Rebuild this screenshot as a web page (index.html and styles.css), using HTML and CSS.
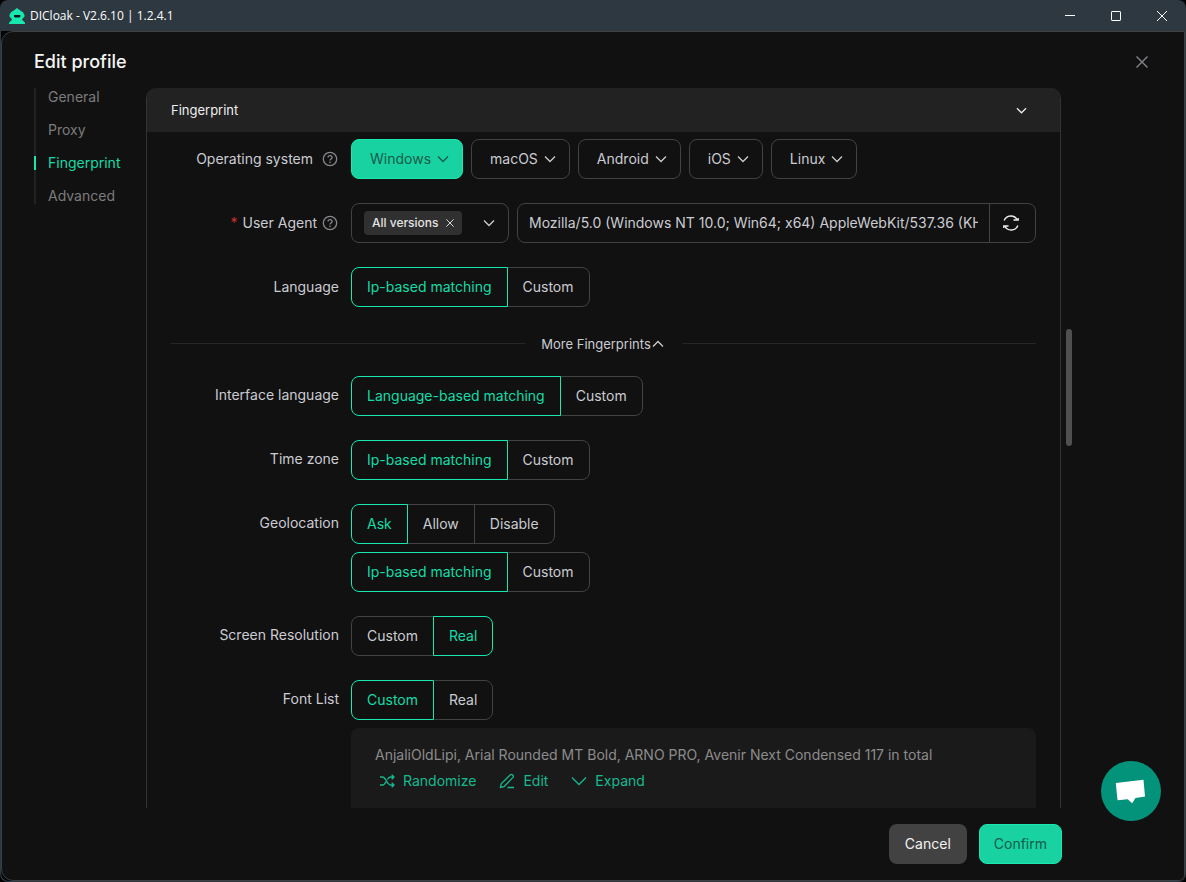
FILE: index.html
```
<!DOCTYPE html>
<html lang="en">
<head>
<meta charset="utf-8">
<title>DICloak</title>
<link rel="stylesheet" href="styles.css">
</head>
<body>
<svg class="sprite" aria-hidden="true">
  <symbol id="chevron" viewBox="0 0 12 12"><path d="M1 3.500 6 8.500l5-5" fill="none" stroke="currentColor" stroke-width="1.300"/></symbol>
  <symbol id="cross" viewBox="0 0 12 12"><path d="M.5.5l11 11M11.500.5l-11 11" fill="none" stroke="currentColor" stroke-width="1.400"/></symbol>
  <symbol id="help" viewBox="0 0 16 16"><g fill="none" stroke="currentColor" stroke-width="1.300"><circle cx="8" cy="8" r="6.700"/><path d="M6 6.600c0-2.800 4.100-2.600 4.100-.1C10.100 8 8 7.900 8 9.600"/></g><circle cx="8" cy="11.400" r=".8" fill="currentColor"/></symbol>
</svg>
<div class="window">
  <header class="titlebar">
    <svg class="logo" viewBox="0 0 16 16"><path fill="#16e8b0" d="M8 0l2.500 2L14 4.200 15.500 7v1.500L12.800 11.500 16 14.700V16H0v-1.300l3.200-3.200L.5 8.500V7L2 4.200 5.500 2z"/><path fill="#0c1a1a" d="M5 7h6.300v1.600l-1 1H6l-1-1z"/></svg>
    <span class="app-name">DICloak - V2.6.10 | 1.2.4.1</span>
    <div class="window-buttons">
      <button type="button" aria-label="Minimize"><svg viewBox="0 0 10 10"><path d="M0 4.500h10"/></svg></button>
      <button type="button" aria-label="Maximize"><svg viewBox="0 0 10 10"><rect x=".5" y=".5" width="9" height="9" rx=".6"/></svg></button>
      <button type="button" aria-label="Close"><svg viewBox="0 0 10 10"><path d="M0 0l10 10M10 0L0 10"/></svg></button>
    </div>
  </header>
  <div class="client">
  <main class="dialog">
    <div class="dialog-head">
      <h1>Edit profile</h1>
      <button class="dialog-close" type="button" aria-label="Close dialog"><svg><use href="#cross"/></svg></button>
    </div>
    <div class="dialog-body">
      <nav class="anchors">
        <a href="#general">General</a>
        <a href="#proxy">Proxy</a>
        <a class="active" href="#fingerprint">Fingerprint</a>
        <a href="#advanced">Advanced</a>
      </nav>
      <section class="panel" id="fingerprint">
        <h2 class="panel-head">Fingerprint <svg class="chevron"><use href="#chevron"/></svg></h2>
        <form class="panel-body">
          <div class="rows">
            <div class="row">
              <span class="label">Operating system <svg class="help spaced"><use href="#help"/></svg></span>
              <div class="controls">
                <button class="os selected" type="button">Windows <svg class="chevron"><use href="#chevron"/></svg></button>
                <button class="os" type="button">macOS <svg class="chevron"><use href="#chevron"/></svg></button>
                <button class="os" type="button">Android <svg class="chevron"><use href="#chevron"/></svg></button>
                <button class="os" type="button">iOS <svg class="chevron"><use href="#chevron"/></svg></button>
                <button class="os" type="button">Linux <svg class="chevron"><use href="#chevron"/></svg></button>
              </div>
            </div>
            <div class="row">
              <label class="label" for="ua"><span class="required">*</span> User Agent <svg class="help"><use href="#help"/></svg></label>
              <div class="controls">
                <div class="versions">
                  <span class="tag">All versions <button type="button" aria-label="Remove All versions"><svg><use href="#cross"/></svg></button></span>
                  <button class="open" type="button" aria-label="Choose versions"><svg class="chevron"><use href="#chevron"/></svg></button>
                </div>
                <div class="ua">
                  <input id="ua" type="text" value="Mozilla/5.0 (Windows NT 10.0; Win64; x64) AppleWebKit/537.36 (KHTML, like Gecko) Chrome/137.0.0.0 Safari/537.36">
                  <button type="button" aria-label="Refresh user agent"><svg viewBox="0 0 18 18"><g fill="none" stroke="currentColor" stroke-width="1.400"><path d="M2.200 6.500C4.200 1 12.300.200 15.300 6M15.800 11.500C13.800 17 5.700 17.800 2.700 12"/><path d="M11.500 6h4.700V4M6.500 12H1.800v2"/></g></svg></button>
                </div>
              </div>
            </div>
            <div class="row" role="radiogroup" aria-labelledby="l-lang">
              <span class="label" id="l-lang">Language</span>
              <div class="segments">
                <label><input type="radio" name="lang" checked><span>Ip-based matching</span></label>
                <label><input type="radio" name="lang"><span>Custom</span></label>
              </div>
            </div>
          </div>
          <div class="more"><button type="button">More Fingerprints<svg class="chevron up"><use href="#chevron"/></svg></button></div>
          <div class="rows compact">
            <div class="row" role="radiogroup" aria-labelledby="l-ui">
              <span class="label" id="l-ui">Interface language</span>
              <div class="segments">
                <label><input type="radio" name="ui" checked><span>Language-based matching</span></label>
                <label><input type="radio" name="ui"><span>Custom</span></label>
              </div>
            </div>
            <div class="row" role="radiogroup" aria-labelledby="l-tz">
              <span class="label" id="l-tz">Time zone</span>
              <div class="segments">
                <label><input type="radio" name="tz" checked><span>Ip-based matching</span></label>
                <label><input type="radio" name="tz"><span>Custom</span></label>
              </div>
            </div>
            <div class="row" role="group" aria-labelledby="l-geo">
              <span class="label" id="l-geo">Geolocation</span>
              <div class="stack">
                <div class="segments">
                  <label><input type="radio" name="geo" checked><span>Ask</span></label>
                  <label><input type="radio" name="geo"><span>Allow</span></label>
                  <label><input type="radio" name="geo"><span>Disable</span></label>
                </div>
                <div class="segments">
                  <label><input type="radio" name="geosrc" checked><span>Ip-based matching</span></label>
                  <label><input type="radio" name="geosrc"><span>Custom</span></label>
                </div>
              </div>
            </div>
            <div class="row" role="radiogroup" aria-labelledby="l-res">
              <span class="label" id="l-res">Screen Resolution</span>
              <div class="segments">
                <label><input type="radio" name="res"><span>Custom</span></label>
                <label><input type="radio" name="res" checked><span>Real</span></label>
              </div>
            </div>
            <div class="row" role="radiogroup" aria-labelledby="l-font">
              <span class="label" id="l-font">Font List</span>
              <div class="stack">
                <div class="segments">
                  <label><input type="radio" name="font" checked><span>Custom</span></label>
                  <label><input type="radio" name="font"><span>Real</span></label>
                </div>
                <div class="fonts">
                  <p>AnjaliOldLipi, Arial Rounded MT Bold, ARNO PRO, Avenir Next Condensed 117 in total</p>
                  <div class="font-actions">
                    <button type="button"><svg viewBox="0 0 16 16"><path d="M1 4h2.500C7 4 8 12 11.500 12H15M1 12h2.500c1.600 0 2.700-1.600 3.600-3.500M8.400 6.500C9.200 5 10.200 4 11.500 4H15M12.700 1.700 15 4l-2.300 2.300M12.700 9.700 15 12l-2.300 2.300"/></svg>Randomize</button>
                    <button type="button"><svg viewBox="0 0 16 16"><path d="M1.500 14.500l.7-3.600L11.300 1.800c1.500-1.300 4 .9 2.700 2.600L5 13.700zM8.500 14.500H15"/></svg>Edit</button>
                    <button type="button"><svg viewBox="0 0 16 16"><path d="M1 4.500 8 11.500l7-7"/></svg>Expand</button>
                  </div>
                </div>
              </div>
            </div>
          </div>
        </form>
      </section>
      <div class="scroll-rail"><div class="scroll-thumb"></div></div>
    </div>
    <footer class="dialog-foot">
      <button class="cancel" type="button">Cancel</button>
      <button class="confirm" type="button">Confirm</button>
    </footer>
  </main>
  </div>
  <button class="chat" type="button" aria-label="Open chat"><svg viewBox="0 0 60 60"><path fill="#fff" d="M14.800 22 42.500 18.700 44 35.600 34.500 37 31.200 42.200 26.700 38.200 16.500 39.200z"/></svg></button>
</div>
</body>
</html>
```
FILE: styles.css
```
:root {
  --bg: #111;
  --line: #424242;
  --text: #cbccd2;
  --accent: #16e8b0;
  --accent-text: #15dca7;
  --fill: #18d2a1;
}
* { box-sizing: border-box; }
body {
  margin: 0;
  background: #000;
  color: var(--text);
  font: 14px/24px Inter, "Noto Sans", sans-serif;
}
button {
  margin: 0;
  padding: 0;
  border: 0;
  background: none;
  color: inherit;
  font: inherit;
  cursor: pointer;
}
svg { display: block; flex: none; }
.sprite { display: none; }
.chevron { width: 12px; height: 12px; }
.chevron.up { transform: rotate(180deg); }

.window {
  position: relative;
  display: flex;
  flex-direction: column;
  height: 100vh;
  padding: 0 1px 1px;
  background: #2e3841;
  border-radius: 8px;
  overflow: hidden;
}
.titlebar {
  display: flex;
  align-items: center;
  height: 31px;
  padding-left: 8px;
  color: #fff;
  font: 12px/16px "Open Sans", "Noto Sans", sans-serif;
}
.logo { width: 16px; height: 16px; margin-right: 5px; }
.window-buttons { display: flex; margin-left: auto; }
.window-buttons button {
  display: grid;
  place-items: center;
  width: 46px;
  height: 31px;
}
.window-buttons svg {
  width: 10px;
  height: 10px;
  overflow: visible;
  fill: none;
  stroke: #fff;
}

.client {
  flex: 1;
  min-height: 0;
  display: flex;
  background: #000;
  border-radius: 0 0 6px 8px;
}
.dialog {
  flex: 1;
  min-width: 0;
  display: flex;
  flex-direction: column;
  padding-left: 32px;
  background: var(--bg);
  border: 1px solid #3d4042;
  border-radius: 12px 0 6px 12px;
}
.dialog-head {
  display: flex;
  align-items: center;
  justify-content: space-between;
  height: 56px;
  padding: 4px 36px 0 0;
}
h1 { margin: 0; color: #f5f5f5; font-size: 18px; font-weight: 500; }
.dialog-close { color: #85868a; }
.dialog-close svg { width: 12px; height: 12px; }
.dialog-body {
  flex: 1;
  min-height: 0;
  display: flex;
}
.anchors {
  display: flex;
  flex-direction: column;
  align-self: flex-start;
  gap: 15px;
  width: 112px;
  height: 116px;
  border-left: 2px solid #222;
}
.anchors a {
  margin-left: -2px;
  padding-left: 14px;
  color: #7c7c7c;
  line-height: 18px;
  text-decoration: none;
}
.anchors .active {
  color: var(--accent-text);
  background: linear-gradient(var(--accent), var(--accent)) 0 50% / 2px 14px no-repeat;
}

.panel {
  flex: 1;
  min-width: 0;
  border: solid #333;
  border-width: 0 1px;
  border-radius: 10px 10px 0 0;
  overflow: hidden;
}
.panel-head {
  display: flex;
  align-items: center;
  justify-content: space-between;
  height: 44px;
  margin: 0;
  padding: 0 33px 0 24px;
  background: #222;
  color: #eee;
  font-size: 13px;
  font-weight: 400;
}
.panel-head .chevron { width: 11px; height: 11px; }
.panel-body { padding: 7px 24px 0; }
.rows { display: flex; flex-direction: column; gap: 24px; }
.row {
  display: grid;
  grid-template-columns: 168px minmax(0, 1fr);
  column-gap: 12px;
  align-items: start;
}
.label {
  display: flex;
  align-items: center;
  justify-content: flex-end;
  gap: 5px;
  height: 40px;
  white-space: nowrap;
}
.compact .label { height: 38px; }
.required { color: #c8322f; }
.help { width: 16px; height: 16px; margin-right: 1px; color: #85868a; }
.help.spaced { margin-left: 4px; }
.controls { display: flex; gap: 8px; }
.os {
  display: flex;
  align-items: center;
  gap: 6px;
  height: 40px;
  padding: 0 13px 0 18px;
  border: 1px solid var(--line);
  border-radius: 8px;
}
.os.selected { background: var(--fill); border-color: var(--accent); color: #155b49; }
.versions {
  display: flex;
  align-items: center;
  justify-content: space-between;
  flex: none;
  width: 158px;
  height: 40px;
  padding: 0 13px 0 12px;
  border: 1px solid var(--line);
  border-radius: 8px;
}
.tag {
  display: flex;
  align-items: center;
  gap: 7px;
  padding: 0 8px;
  border-radius: 4px;
  background: #303030;
  color: #e4e4e4;
  font-size: 12px;
  font-weight: 500;
}
.tag svg { width: 8px; height: 8px; }
.ua {
  flex: 1;
  min-width: 0;
  display: flex;
  height: 40px;
  border: 1px solid var(--line);
  border-radius: 8px;
}
.ua input {
  flex: 1;
  min-width: 0;
  margin: 0 11px;
  padding: 0;
  border: 0;
  outline: 0;
  background: none;
  color: inherit;
  font: inherit;
}
.ua button {
  display: grid;
  place-items: center;
  width: 46px;
  padding-right: 3px;
  border-left: 1px solid var(--line);
  color: #eee;
}
.ua svg { width: 18px; height: 18px; }

.segments { display: flex; }
.segments label { position: relative; cursor: pointer; }
.segments label + label { margin-left: -1px; }
.segments input {
  position: absolute;
  inset: 0;
  margin: 0;
  opacity: 0;
}
.segments span {
  display: block;
  padding: 0 15px;
  border: 1px solid var(--line);
  line-height: 38px;
}
.segments label:first-child span { border-radius: 8px 0 0 8px; }
.segments label:last-child span { border-radius: 0 8px 8px 0; }
.segments input:checked + span {
  position: relative;
  z-index: 1;
  border-color: var(--accent);
  color: var(--accent-text);
}

.more {
  display: flex;
  align-items: center;
  gap: 16px;
  margin: 24px 0 20px;
  font-size: 13px;
}
.more::before, .more::after {
  content: "";
  flex: 1;
  border-top: 1px solid #262626;
}
.more button { display: flex; align-items: center; gap: 1px; height: 25px; }
.more .chevron { margin-right: 2px; }

.stack { display: flex; flex-direction: column; gap: 8px; }
.fonts {
  padding: 15px 24px 24px;
  border-radius: 8px;
  background: #1a1a1a;
  color: #8c8c8c;
}
.fonts p { margin: 0 0 2px; }
.font-actions {
  display: flex;
  gap: 23px;
  padding-left: 4px;
  color: #17b98f;
}
.font-actions button { display: flex; align-items: center; gap: 8px; }
.font-actions svg {
  width: 16px;
  height: 16px;
  fill: none;
  stroke: currentColor;
  stroke-width: 1.3;
}

.scroll-rail {
  width: 113px;
  margin-right: 10px;
  padding: 241px 0 0 5px;
}
.scroll-thumb {
  width: 6px;
  height: 117px;
  border-radius: 3px;
  background: #4f4f4f;
}
.dialog-foot {
  display: flex;
  justify-content: flex-end;
  gap: 12px;
  padding: 16px 122px 16px 0;
}
.dialog-foot button {
  height: 40px;
  padding: 0 16px;
  border-radius: 8px;
}
.cancel { background: #424242; color: #f2f2f2; }
.dialog-foot .confirm {
  padding: 0 14px;
  border: 1px solid var(--accent);
  background: var(--fill);
  color: #155b49;
}
.chat {
  position: absolute;
  right: 25px;
  bottom: 61px;
  width: 60px;
  height: 60px;
  border-radius: 50%;
  background: #03937b;
}
.chat svg { width: 60px; height: 60px; }
```
